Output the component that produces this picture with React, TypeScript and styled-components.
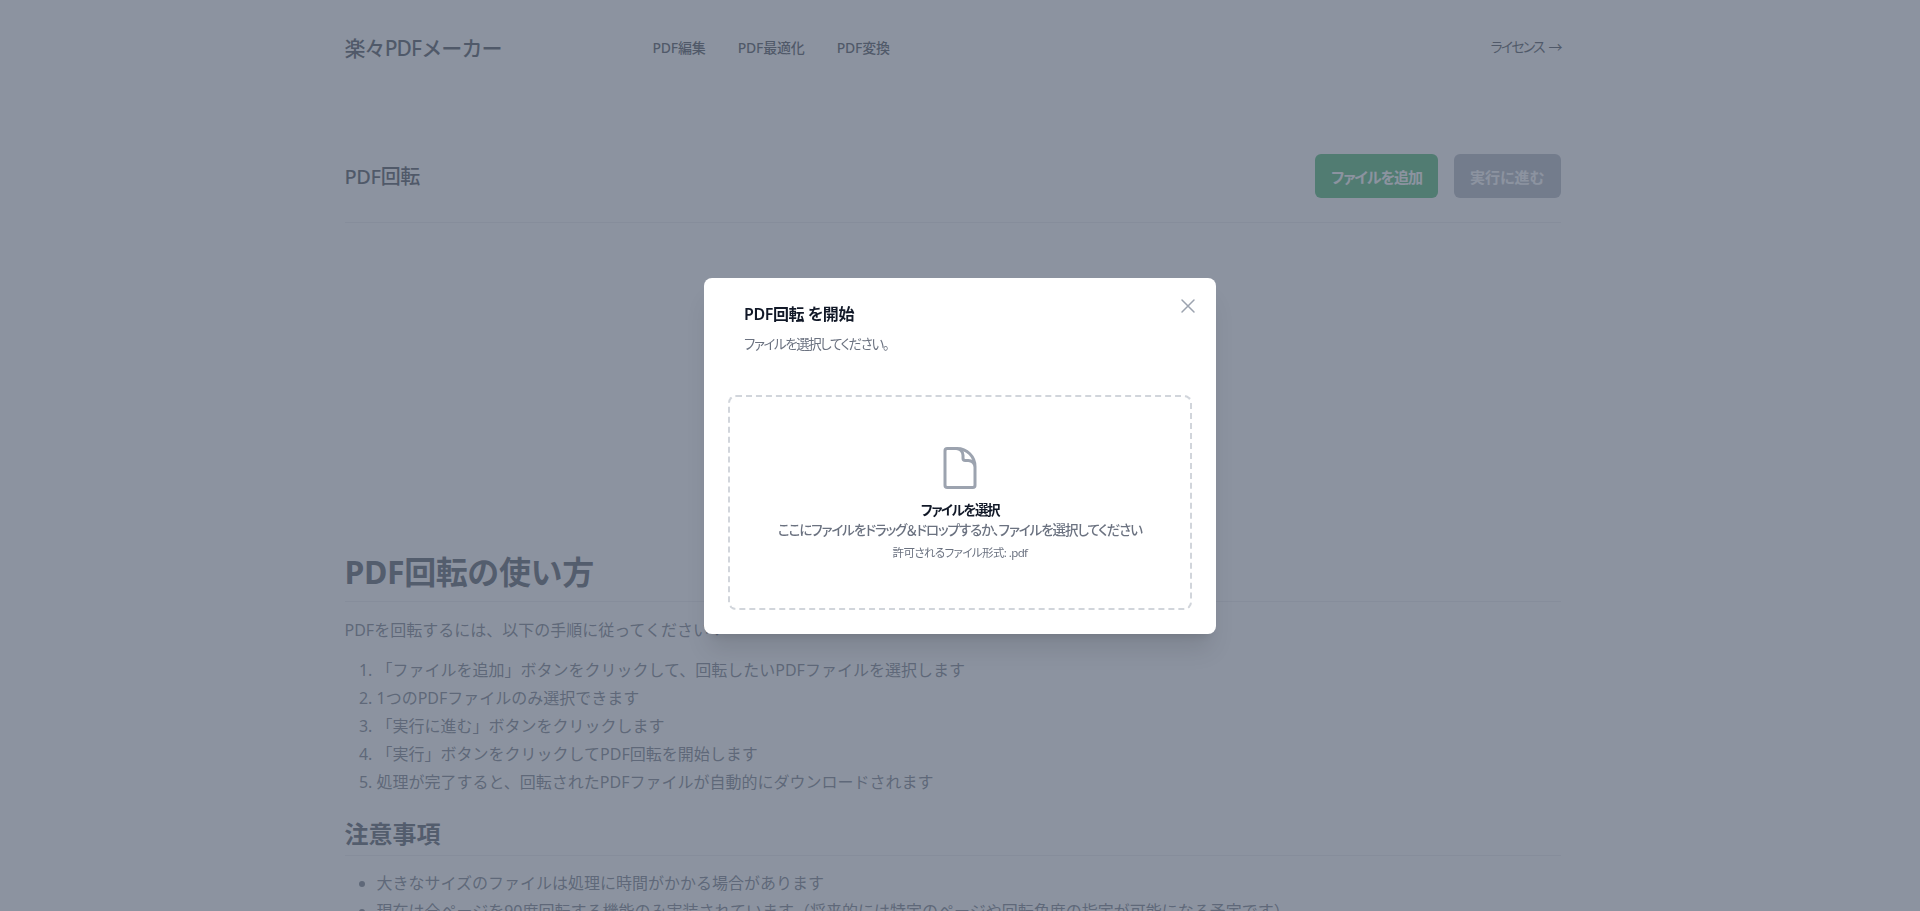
import React from 'react';
import styled, { createGlobalStyle } from 'styled-components';

const GlobalStyle = createGlobalStyle`
	* {
		box-sizing: border-box;
	}
	html {
		overflow: hidden;
		padding-right: 15px;
		height: 100%;
	}
	body {
		margin: 0;
		background: #fff;
		color: #111827;
		font-family: 'Noto Sans', 'Noto Sans CJK JP', sans-serif;
	}
`;

const Page = styled.div`
	max-width: 1216px;
	margin: 0 auto;
`;

const Header = styled.header`
	display: flex;
	align-items: center;
	height: 94px;
`;

const Logo = styled.a`
	width: 308px;
	font-size: 21px;
	font-weight: 500;
	letter-spacing: -0.9px;
	color: #111827;
`;

const Nav = styled.nav`
	display: flex;
	flex: 1;
	gap: 32px;
	padding-top: 2px;
`;

const NavLink = styled.a`
	font-size: 14px;
	line-height: 24px;
	font-weight: 500;
	letter-spacing: -0.2px;
	color: #111827;
`;

const License = styled.a`
	font-size: 14px;
	line-height: 24px;
	font-weight: 400;
	letter-spacing: -1.9px;
	word-spacing: 3px;
	color: #111827;
	font-feature-settings: 'palt';
`;

const TitleRow = styled.div`
	display: flex;
	align-items: center;
	justify-content: space-between;
	margin-top: 60px;
	padding-bottom: 24px;
	border-bottom: 1px solid #e5e7eb;
`;

const PageTitle = styled.h2`
	margin: 0 0 2px;
	font-size: 20px;
	font-weight: 500;
	letter-spacing: -0.4px;
	color: #111827;
`;

const Actions = styled.div`
	display: flex;
	gap: 16px;
`;

const ActionButton = styled.button<{ $tone: 'green' | 'gray' }>`
	height: 44px;
	padding: 0 16px;
	border: 0;
	border-radius: 6px;
	background: ${(p) => (p.$tone === 'green' ? '#16a34a' : '#9ca3af')};
	color: #fff;
	font-family: inherit;
	font-size: 15px;
	font-weight: 600;
	letter-spacing: ${(p) => (p.$tone === 'green' ? '-1px' : '0')};
	font-feature-settings: 'palt';
`;

const Guide = styled.section`
	margin-top: 325px;
`;

const GuideTitle = styled.h1`
	margin: 0 0 14px;
	padding-bottom: 5px;
	border-bottom: 1px solid #e5e7eb;
	font-size: 32px;
	line-height: 48px;
	font-weight: 700;
	letter-spacing: -0.4px;
	color: #1f2937;
`;

const SubTitle = styled.h2`
	margin: 20px 0 13px;
	padding-bottom: 3px;
	border-bottom: 1px solid #e5e7eb;
	font-size: 24px;
	line-height: 36px;
	font-weight: 700;
	color: #1f2937;
`;

const Lead = styled.p`
	margin: 0 0 12px;
	font-size: 16px;
	line-height: 28px;
	color: #4b5563;
`;

const OrderedList = styled.ol`
	margin: 0;
	padding-left: 32px;
	font-size: 16px;
	line-height: 28px;
	color: #4b5563;
`;

const BulletList = styled.ul`
	margin: 0;
	padding-left: 32px;
	font-size: 16px;
	line-height: 28px;
	color: #4b5563;
`;

const Overlay = styled.div`
	position: fixed;
	inset: 0;
	background: rgba(102, 111, 128, 0.75);
`;

const DialogWrap = styled.div`
	position: fixed;
	inset: 0;
	display: flex;
	align-items: center;
	justify-content: center;
`;

const Dialog = styled.div`
	position: relative;
	width: 512px;
	height: 356px;
	padding: 24px;
	border-radius: 8px;
	background: #fff;
	box-shadow: 0 20px 25px -5px rgba(0, 0, 0, 0.1), 0 8px 10px -6px rgba(0, 0, 0, 0.1);
	font-feature-settings: 'palt';
`;

const CloseButton = styled.button`
	position: absolute;
	top: 16px;
	right: 16px;
	display: flex;
	width: 24px;
	height: 24px;
	padding: 0;
	border: 0;
	background: none;
	color: #9ca3af;
`;

const DialogHead = styled.div`
	padding-left: 16px;
`;

const DialogTitle = styled.h3`
	margin: 0;
	font-size: 16px;
	line-height: 24px;
	font-weight: 600;
	letter-spacing: -0.4px;
	color: #111827;
`;

const DialogText = styled.p`
	margin: 8px 0 0;
	font-size: 13.5px;
	line-height: 20px;
	letter-spacing: -1.4px;
	color: #6b7280;
`;

const DropZone = styled.div`
	display: flex;
	flex-direction: column;
	align-items: center;
	height: 215px;
	margin-top: 41px;
	padding-top: 47px;
	border: 2px dashed #d1d5db;
	border-radius: 8px;
`;

const DropIcon = styled.svg`
	width: 48px;
	height: 48px;
	color: #9ca3af;
`;

const DropTitle = styled.div`
	margin-top: 8px;
	font-size: 13.5px;
	line-height: 20px;
	font-weight: 600;
	letter-spacing: -1.4px;
	color: #111827;
`;

const DropHint = styled.div`
	font-size: 13.5px;
	line-height: 20px;
	font-weight: 500;
	letter-spacing: -1.05px;
	color: #6b7280;
`;

const DropFormats = styled.div`
	margin-top: 3px;
	font-size: 11.5px;
	line-height: 20px;
	letter-spacing: -0.6px;
	color: #6b7280;
`;

const steps = [
	'「ファイルを追加」ボタンをクリックして、回転したいPDFファイルを選択します',
	'1つのPDFファイルのみ選択できます',
	'「実行に進む」ボタンをクリックします',
	'「実行」ボタンをクリックしてPDF回転を開始します',
	'処理が完了すると、回転されたPDFファイルが自動的にダウンロードされます',
];

const notes = [
	'大きなサイズのファイルは処理に時間がかかる場合があります',
	'現在は全ページを90度回転する機能のみ実装されています（将来的には特定のページや回転角度の指定が可能になる予定です）',
];

function App() {
	return (
		<>
			<GlobalStyle />
			<Page>
				<Header>
					<Logo>楽々PDFメーカー</Logo>
					<Nav>
						<NavLink>PDF編集</NavLink>
						<NavLink>PDF最適化</NavLink>
						<NavLink>PDF変換</NavLink>
					</Nav>
					<License>ライセンス →</License>
				</Header>
				<TitleRow>
					<PageTitle>PDF回転</PageTitle>
					<Actions>
						<ActionButton $tone="green">ファイルを追加</ActionButton>
						<ActionButton $tone="gray">実行に進む</ActionButton>
					</Actions>
				</TitleRow>
				<Guide>
					<GuideTitle>PDF回転の使い方</GuideTitle>
					<Lead>PDFを回転するには、以下の手順に従ってください：</Lead>
					<OrderedList>
						{steps.map((step) => (
							<li key={step}>{step}</li>
						))}
					</OrderedList>
					<SubTitle>注意事項</SubTitle>
					<BulletList>
						{notes.map((note) => (
							<li key={note}>{note}</li>
						))}
					</BulletList>
				</Guide>
			</Page>
			<Overlay />
			<DialogWrap>
				<Dialog>
					<CloseButton>
						<svg fill="none" viewBox="0 0 24 24" strokeWidth={1.5} stroke="currentColor">
							<path strokeLinecap="round" strokeLinejoin="round" d="M6 18L18 6M6 6l12 12" />
						</svg>
					</CloseButton>
					<DialogHead>
						<DialogTitle>PDF回転 を開始</DialogTitle>
						<DialogText>ファイルを選択してください。</DialogText>
					</DialogHead>
					<DropZone>
						<DropIcon fill="none" viewBox="0 0 24 24" strokeWidth={1.5} stroke="currentColor">
							<path
								strokeLinecap="round"
								strokeLinejoin="round"
								d="M19.5 14.25v-2.625a3.375 3.375 0 00-3.375-3.375h-1.5A1.125 1.125 0 0113.5 7.125v-1.5a3.375 3.375 0 00-3.375-3.375H8.25m2.25 0H5.625c-.621 0-1.125.504-1.125 1.125v17.25c0 .621.504 1.125 1.125 1.125h12.75c.621 0 1.125-.504 1.125-1.125V11.25a9 9 0 00-9-9z"
							/>
						</DropIcon>
						<DropTitle>ファイルを選択</DropTitle>
						<DropHint>ここにファイルをドラッグ＆ドロップするか、ファイルを選択してください</DropHint>
						<DropFormats>許可されるファイル形式: .pdf</DropFormats>
					</DropZone>
				</Dialog>
			</DialogWrap>
		</>
	);
}

export default App;
